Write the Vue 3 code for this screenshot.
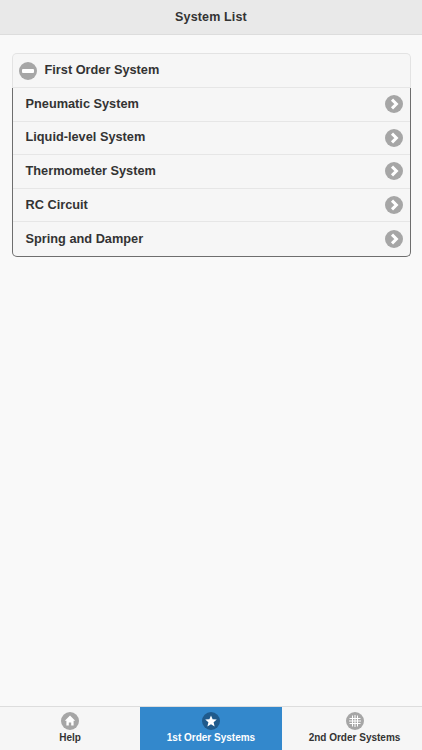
<script setup>
const items = ['Pneumatic System', 'Liquid-level System', 'Thermometer System', 'RC Circuit', 'Spring and Damper']
const tabs = [
  { label: 'Help', icon: 'home' },
  { label: '1st Order Systems', icon: 'star', active: true },
  { label: '2nd Order Systems', icon: 'grid' }
]
</script>

<template>
  <div class="page">
    <header class="top">System List</header>
    <main class="content">
      <section class="card">
        <div class="card-head">
          <span class="disc minus"><span class="bar"></span></span>
          <span class="head-text">First Order System</span>
        </div>
        <ul class="list">
          <li v-for="item in items" :key="item" class="row">
            <span class="row-text">{{ item }}</span>
            <svg class="disc-svg" viewBox="0 0 18 18" width="18" height="18">
              <circle cx="9" cy="9" r="9" fill="#a6a6a6" />
              <path d="M7 4.6 L11.4 9 L7 13.4" fill="none" stroke="#fff" stroke-width="3" />
            </svg>
          </li>
        </ul>
      </section>
    </main>
    <nav class="tabs">
      <div v-for="tab in tabs" :key="tab.label" class="tab" :class="{ active: tab.active }">
        <svg v-if="tab.icon === 'home'" viewBox="0 0 18 18" width="18" height="18">
          <circle cx="9" cy="9" r="9" fill="#a6a6a6" />
          <path d="M9 3.6 L14.2 8.8 H12.6 V13.6 H10.2 V10.4 H7.8 V13.6 H5.4 V8.8 H3.8 Z" fill="#fff" />
        </svg>
        <svg v-else-if="tab.icon === 'star'" viewBox="0 0 18 18" width="18" height="18">
          <circle cx="9" cy="9" r="9" fill="#1f5a8c" />
          <path d="M9 3.4 L10.6 7.3 L14.8 7.6 L11.6 10.3 L12.6 14.4 L9 12.2 L5.4 14.4 L6.4 10.3 L3.2 7.6 L7.4 7.3 Z" fill="#fff" />
        </svg>
        <svg v-else viewBox="0 0 18 18" width="18" height="18">
          <circle cx="9" cy="9" r="9" fill="#a6a6a6" />
          <path d="M3.5 6.5 H14.5 M3 9 H15 M3.5 11.5 H14.5 M6.5 3.5 V14.5 M9 3 V15 M11.5 3.5 V14.5" fill="none" stroke="#fff" stroke-width="1" />
        </svg>
        <span class="tab-label">{{ tab.label }}</span>
      </div>
    </nav>
  </div>
</template>

<style scoped>
.page {
  width: 422px;
  height: 750px;
  display: flex;
  flex-direction: column;
  background: #f9f9f9;
  font-family: "Liberation Sans", Arial, sans-serif;
  font-weight: 700;
  color: #333;
  overflow: hidden;
}
.top {
  height: 34px;
  flex: none;
  display: flex;
  align-items: center;
  justify-content: center;
  background: #e9e9e9;
  border-bottom: 1px solid #dddddd;
  font-size: 12.5px;
  letter-spacing: 0.15px;
}
.content {
  flex: 1;
  padding: 18px 11px 0 11.5px;
}
.card {
  border-radius: 5px;
}
.card-head {
  height: 33px;
  display: flex;
  align-items: center;
  gap: 7.5px;
  padding-left: 6.5px;
  background: #f6f6f6;
  border: 1px solid #e3e3e3;
  border-bottom: 1px solid #e6e6e6;
  border-radius: 5px 5px 0 0;
  font-size: 12.75px;
}
.head-text {
  margin-bottom: 2px;
}
.disc {
  width: 18px;
  height: 18px;
  border-radius: 50%;
  background: #a6a6a6;
  display: flex;
  align-items: center;
  justify-content: center;
}
.bar {
  width: 12px;
  height: 4px;
  background: #fff;
  border-radius: 1px;
}
.list {
  list-style: none;
  margin: 0;
  padding: 0;
  background: #f6f6f6;
  border: 1px solid #6e6e6e;
  border-top: 0;
  border-radius: 0 0 5px 5px;
}
.row {
  height: 33.6px;
  box-sizing: border-box;
  display: flex;
  align-items: center;
  justify-content: space-between;
  padding: 0 7px 0 13px;
  border-bottom: 1px solid #e6e6e6;
  font-size: 12.75px;
}
.row:last-child {
  border-bottom: 0;
}
.row-text {
  margin-bottom: 2px;
}
.tabs {
  height: 43px;
  flex: none;
  display: grid;
  grid-template-columns: 140px 142px 140px;
  background: #f6f6f6;
  border-top: 1px solid #dddddd;
}
.tab {
  display: flex;
  flex-direction: column;
  align-items: center;
  padding-top: 5px;
  gap: 2px;
}
.tab:last-child {
  padding-left: 5px;
}
.tab-label {
  font-size: 10px;
  line-height: 12px;
}
.active {
  background: #3388cc;
  color: #fff;
}
</style>
